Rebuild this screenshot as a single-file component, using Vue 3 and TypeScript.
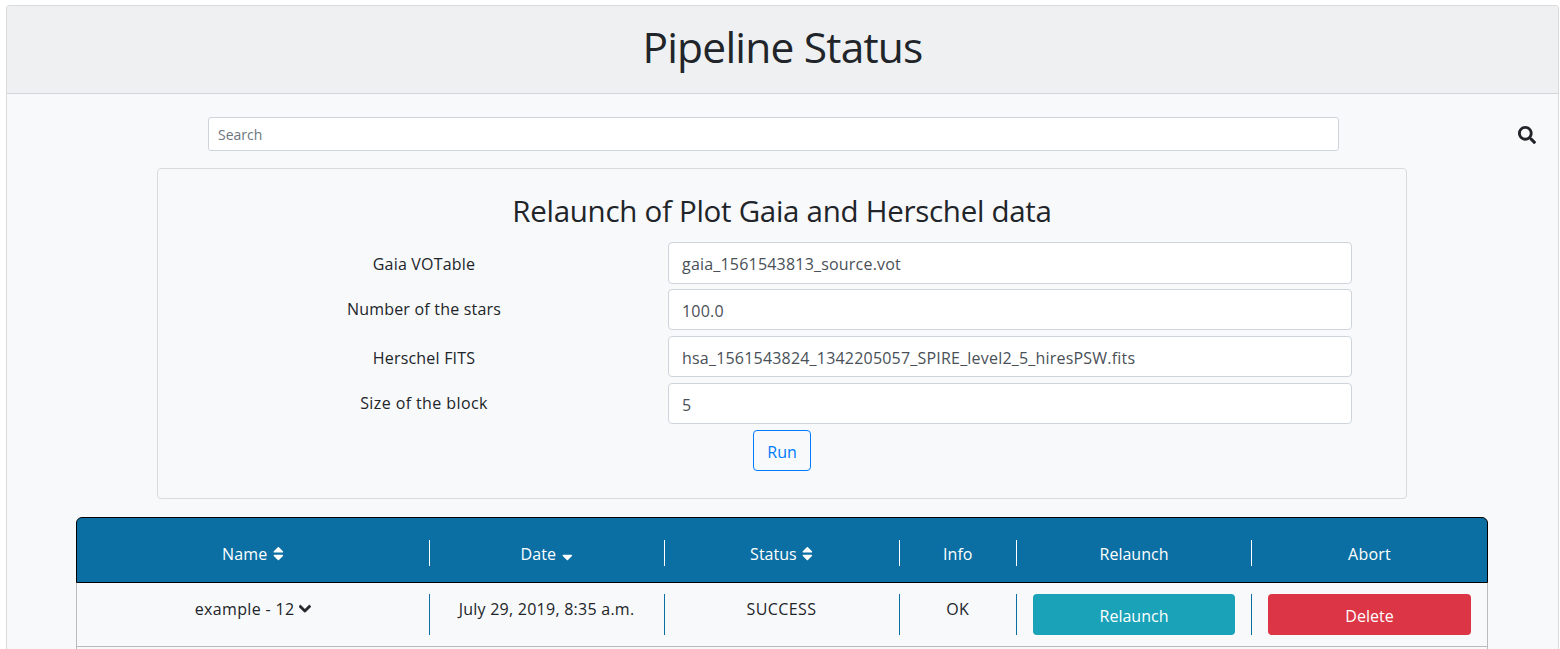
<script setup lang="ts">
interface Field { label: string; value: string; cls: string }
interface Column { title: string; icon?: 'both' | 'down'; span: string; cls: string }

const fields: Field[] = [
  { label: 'Gaia VOTable', value: 'gaia_1561543813_source.vot', cls: 'first' },
  { label: 'Number of the stars', value: '100.0', cls: 'raised' },
  { label: 'Herschel FITS', value: 'hsa_1561543824_1342205057_SPIRE_level2_5_hiresPSW.fits', cls: '' },
  { label: 'Size of the block', value: '5', cls: 'raised wide' },
]
const columns: Column[] = [
  { title: 'Name', icon: 'both', span: 'w3', cls: 'name' },
  { title: 'Date', icon: 'down', span: 'w2', cls: 'date' },
  { title: 'Status', icon: 'both', span: 'w2', cls: 'status' },
  { title: 'Info', span: 'w1', cls: 'info' },
  { title: 'Relaunch', span: 'w2', cls: 'relaunch' },
  { title: 'Abort', span: 'w2', cls: 'abort' },
]
const lower = 'M41 288h238c21.4 0 32.1 25.9 17 41L177 448c-9.4 9.4-24.6 9.4-33.9 0L24 329c-15.1-15.1-4.4-41 17-41z'
const upper = 'M296 183L177 64c-9.4-9.4-24.6-9.4-33.9 0L24 183c-15.1 15.1-4.4 41 17 41h238c21.4 0 32.1-25.9 17-41z'
</script>

<template>
  <main class="card">
    <header class="card-header"><h1>Pipeline Status</h1></header>
    <div class="search-row">
      <div class="search-box">Search</div>
      <svg class="search-icon" viewBox="0 0 512 512"><path d="M505 442.7L405.3 343c-4.5-4.5-10.6-7-17-7H372c27.6-35.3 44-79.7 44-128C416 93.1 322.9 0 208 0S0 93.1 0 208s93.1 208 208 208c48.3 0 92.7-16.4 128-44v16.3c0 6.4 2.5 12.5 7 17l99.7 99.7c9.4 9.4 24.6 9.4 33.9 0l28.3-28.3c9.4-9.4 9.4-24.6.1-34zM208 336c-70.7 0-128-57.2-128-128 0-70.7 57.2-128 128-128 70.7 0 128 57.2 128 128 0 70.7-57.2 128-128 128z" /></svg>
    </div>
    <section class="panel">
      <h2>Relaunch of Plot Gaia and Herschel data</h2>
      <div v-for="f in fields" :key="f.label" class="field" :class="f.cls">
        <div class="label">{{ f.label }}</div>
        <div class="control">{{ f.value }}</div>
      </div>
      <button class="run">Run</button>
    </section>
    <section class="table">
      <div class="row head">
        <div v-for="c in columns" :key="c.title" class="col" :class="[c.span, c.cls]">
          <span>{{ c.title }}</span>
          <svg v-if="c.icon" class="sort" viewBox="0 0 320 512"><path :d="lower" /><path v-if="c.icon === 'both'" :d="upper" /></svg>
        </div>
      </div>
      <div class="row body">
        <div class="col w3 example">
          <span>example - 12</span>
          <svg class="chevron" viewBox="0 0 448 512"><path d="M207.029 381.476L12.686 187.132c-9.373-9.373-9.373-24.569 0-33.941l22.667-22.667c9.357-9.357 24.522-9.375 33.901-.04L224 284.505l154.745-154.021c9.379-9.335 24.544-9.317 33.901.04l22.667 22.667c9.373 9.373 9.373 24.569 0 33.941L240.971 381.476c-9.373 9.372-24.569 9.372-33.942 0z" /></svg>
        </div>
        <div class="col w2 when">July 29, 2019, 8:35 a.m.</div>
        <div class="col w2 result">SUCCESS</div>
        <div class="col w1 result">OK</div>
        <div class="col w2"><button class="btn teal">Relaunch</button></div>
        <div class="col w2"><button class="btn red">Delete</button></div>
      </div>
      <div class="row next"></div>
    </section>
  </main>
</template>

<style>
html, body { margin: 0; background: #fff; overflow: hidden; }
</style>
<style scoped>
* { box-sizing: border-box; }
.card { width: 1553px; height: 644px; margin: 5px 0 0 6px; border: 1px solid #d8dadc; border-bottom: 0; border-radius: 4px 4px 0 0; background: #f8f9fb; color: #212529; font: 16px/26px 'Open Sans', 'Noto Sans', sans-serif; overflow: hidden; white-space: nowrap; }
.card-header { height: 88px; background: #eff0f2; border-bottom: 1px solid #d3d5d8; text-align: center; }
h1 { margin: 0; font-size: 42.5px; font-weight: 400; line-height: 82px; letter-spacing: -0.8px; }
.search-row { height: 34px; margin: 23px 22px 0 201px; display: flex; align-items: center; justify-content: space-between; }
.search-box { width: 1131px; height: 34px; border: 1px solid #ced4da; border-radius: 3px; background: #fff; padding: 0 9px; font-size: 14px; line-height: 33px; color: #6c757d; }
.search-icon { width: 18px; height: 18px; margin-top: 1px; fill: #212529; }
.panel { width: 1250px; height: 331px; margin: 17px 0 0 150px; border: 1px solid #d8dadc; border-radius: 4px; padding: 21px 54px 0; text-align: center; }
h2 { margin: 0 0 10px; font-size: 29.5px; line-height: 42px; font-weight: 400; letter-spacing: -0.28px; }
.field { display: flex; height: 41px; margin-bottom: 6px; letter-spacing: 0.2px; }
.field.first { height: 42px; margin-bottom: 5px; }
.label { width: 424px; margin-right: 32px; padding-top: 9px; flex: none; }
.field.raised .label { padding-top: 7px; }
.field.wide .label { letter-spacing: 0.4px; }
.control { width: 684px; flex: none; border: 1px solid #ced4da; border-radius: 4px; background: #fff; color: #495057; text-align: left; padding: 0 13px; line-height: 42px; }
button { font: inherit; padding: 0; display: block; border-radius: 4px; }
.run { width: 58px; height: 41px; margin: 0 auto; border: 1px solid #007bff; background: transparent; color: #007bff; line-height: 42px; }
.table { width: 1412px; margin: 18px 0 0 69px; text-align: center; }
.row { display: flex; border: 1px solid #b9bbbd; border-top: 0; }
.head { height: 66px; border: 1px solid #000; border-radius: 6px 6px 0 0; background: #0b6fa4; color: #fff; padding-top: 22px; }
.col { border-right: 1px solid #0b6fa4; height: 41px; padding: 2px 16px 0; display: flex; justify-content: center; }
.head .col { height: 26px; border-color: #fff; padding-top: 1px; }
.row .col:last-child { border-right: 0; }
.w1 { width: 117.5px; }
.w2 { width: 235px; }
.w3 { width: 352.5px; }
.sort { width: 10.75px; height: 17.2px; fill: currentColor; margin: 4px 0 0 5.5px; }
.name { letter-spacing: 0.15px; }
.date { letter-spacing: 0.15px; }
.abort { letter-spacing: 0.2px; }
.body { height: 64px; padding-top: 11px; }
.example { letter-spacing: 0.36px; }
.when { letter-spacing: 0.25px; }
.result { letter-spacing: 0.4px; }
.chevron { width: 11.8px; height: 13.5px; fill: #212529; stroke: #212529; stroke-width: 36; margin: 5.5px 0 0 4.5px; }
.body .col:nth-child(n+5) { padding-top: 0; }
.btn { width: 100%; height: 41px; border: 0; color: #fff; line-height: 26px; padding-top: 2px; }
.teal { background: #19a2b8; }
.red { background: #dc3545; }
.next { height: 60px; }
</style>
